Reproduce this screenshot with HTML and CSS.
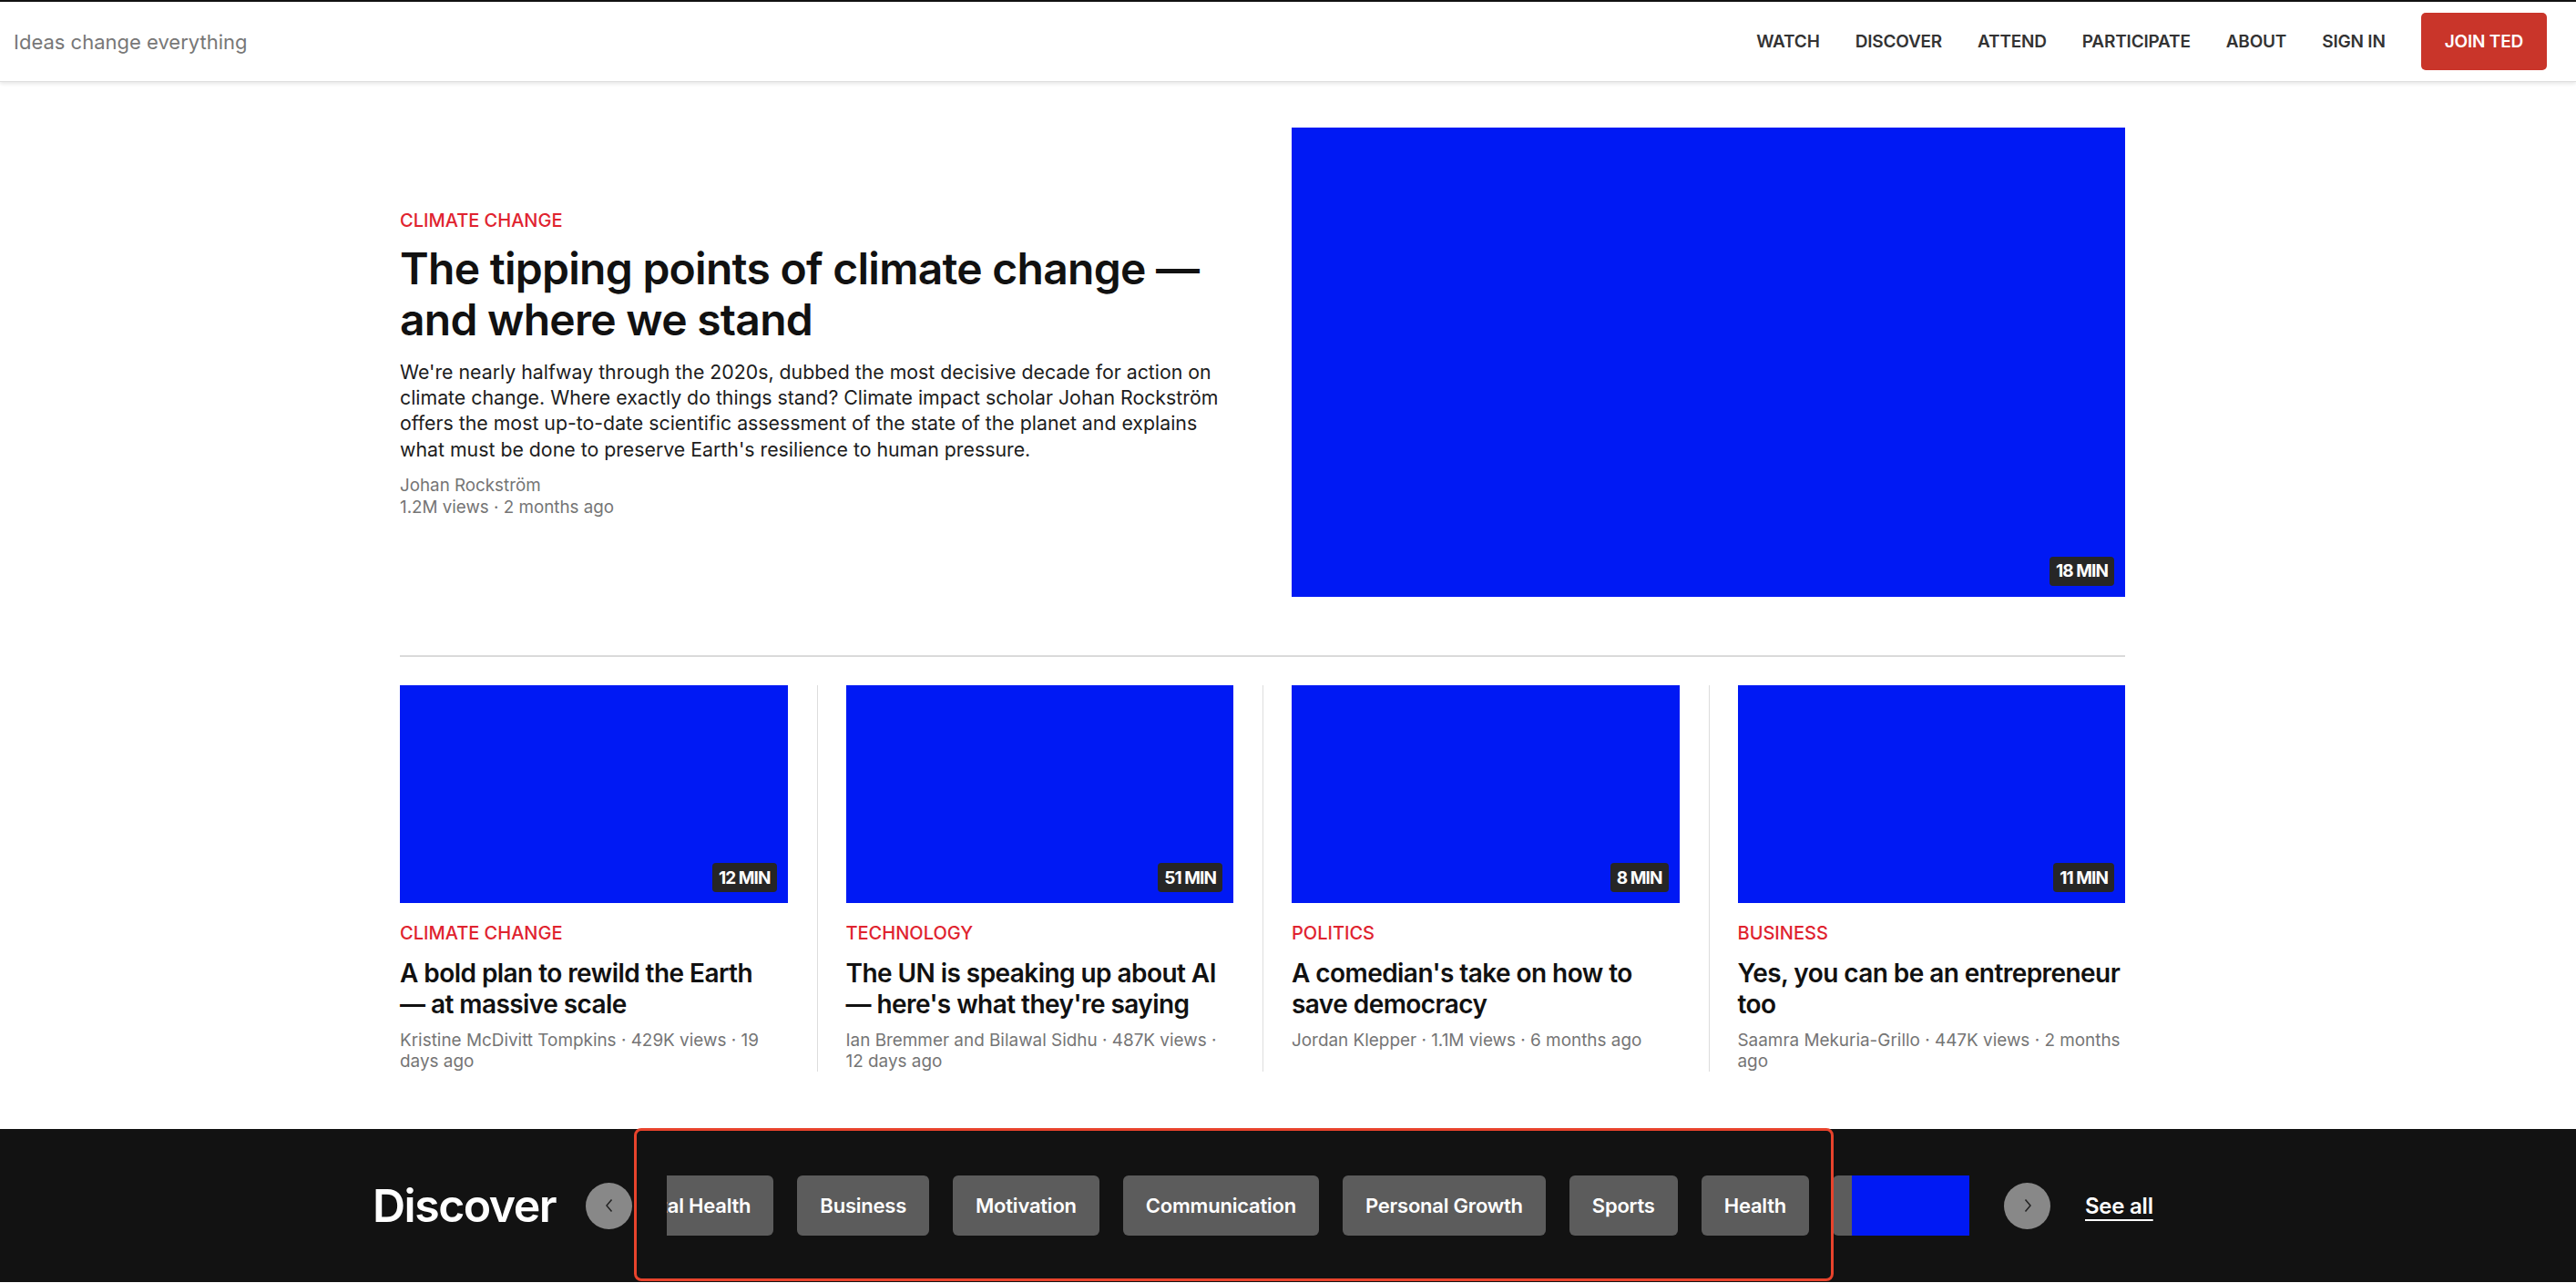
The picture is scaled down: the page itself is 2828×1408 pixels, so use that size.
FILE: index.html
```html
<!DOCTYPE html>
<html lang="en">
<head>
<meta charset="utf-8">
<title>TED: Ideas change everything</title>
<link rel="stylesheet" href="styles.css">
</head>
<body>
<header class="site-header">
  <div class="brand">Ideas change everything</div>
  <nav class="main-nav">
    <a class="nav-link" href="#">WATCH</a>
    <a class="nav-link" href="#">DISCOVER</a>
    <a class="nav-link" href="#">ATTEND</a>
    <a class="nav-link" href="#">PARTICIPATE</a>
    <a class="nav-link" href="#">ABOUT</a>
    <a class="nav-link" href="#">SIGN IN</a>
    <a class="join-btn" href="#">JOIN TED</a>
  </nav>
</header>

<main class="content">
  <section class="hero">
    <div class="hero-text">
      <div class="topic">CLIMATE CHANGE</div>
      <h1 class="hero-title">The tipping points of climate change — and where we stand</h1>
      <p class="hero-desc">We're nearly halfway through the 2020s, dubbed the most decisive decade for action on climate change. Where exactly do things stand? Climate impact scholar Johan Rockström offers the most up-to-date scientific assessment of the state of the planet and explains what must be done to preserve Earth's resilience to human pressure.</p>
      <div class="hero-meta">
        <div>Johan Rockström</div>
        <div>1.2M views · 2 months ago</div>
      </div>
    </div>
    <div class="thumb hero-thumb"><span class="duration">18 MIN</span></div>
  </section>

  <hr class="divider">

  <section class="cards">
    <article class="card">
      <div class="thumb"><span class="duration">12 MIN</span></div>
      <div class="topic card-topic">CLIMATE CHANGE</div>
      <h2 class="card-title">A bold plan to rewild the Earth —&nbsp;at massive scale</h2>
      <div class="card-meta">Kristine McDivitt Tompkins · 429K views · 19 days ago</div>
    </article>
    <article class="card">
      <div class="thumb"><span class="duration">51 MIN</span></div>
      <div class="topic card-topic">TECHNOLOGY</div>
      <h2 class="card-title">The UN is speaking up about AI —&nbsp;here's what they're saying</h2>
      <div class="card-meta">Ian Bremmer and Bilawal Sidhu · 487K views · 12 days ago</div>
    </article>
    <article class="card">
      <div class="thumb"><span class="duration">8 MIN</span></div>
      <div class="topic card-topic">POLITICS</div>
      <h2 class="card-title">A comedian's take on how to save democracy</h2>
      <div class="card-meta">Jordan Klepper · 1.1M views · 6 months ago</div>
    </article>
    <article class="card">
      <div class="thumb"><span class="duration">11 MIN</span></div>
      <div class="topic card-topic">BUSINESS</div>
      <h2 class="card-title">Yes, you can be an entrepreneur too</h2>
      <div class="card-meta">Saamra Mekuria-Grillo · 447K views · 2 months ago</div>
    </article>
  </section>
</main>

<section class="discover">
  <h2 class="discover-title">Discover</h2>
  <button class="arrow" aria-label="Previous">
    <svg width="14" height="20" viewBox="0 0 14 20"><polyline points="9.5,3.5 4,10 9.5,16.5" fill="none" stroke="#222" stroke-width="1.5"/></svg>
  </button>
  <div class="chip-viewport">
    <div class="chip-track">
      <span class="chip">Mental Health</span>
      <span class="chip">Business</span>
      <span class="chip">Motivation</span>
      <span class="chip">Communication</span>
      <span class="chip">Personal Growth</span>
      <span class="chip">Sports</span>
      <span class="chip">Health</span>
      <span class="chip">Innovation</span>
    </div>
    <div class="chip-cover"></div>
  </div>
  <button class="arrow" aria-label="Next">
    <svg width="14" height="20" viewBox="0 0 14 20"><polyline points="4.5,3.5 10,10 4.5,16.5" fill="none" stroke="#222" stroke-width="1.5"/></svg>
  </button>
  <a class="see-all" href="#">See all</a>
</section>

<div class="highlight-box"></div>
</body>
</html>
```

FILE: styles.css
```css
* { box-sizing: border-box; }

html, body {
  margin: 0;
  padding: 0;
  background: #ffffff;
  font-family: Inter, "Noto Sans", "Liberation Sans", sans-serif;
  color: #111111;
}

body { position: relative; overflow: hidden; }

/* Header */
.site-header {
  height: 89px;
  border-top: 2px solid #111;
  display: flex;
  align-items: center;
  justify-content: space-between;
  padding: 0 32px 0 15px;
  background: #fff;
  box-shadow: 0 1px 0 #dedede, 0 3px 4px rgba(0, 0, 0, 0.1);
  position: relative;
  z-index: 2;
}

.brand {
  font-size: 22px;
  color: #777777;
  font-weight: 400;
}

.main-nav {
  display: flex;
  align-items: center;
  gap: 39px;
}

.nav-link {
  font-size: 19px;
  font-weight: 600;
  color: #333333;
  text-decoration: none;
  letter-spacing: -0.01em;
}

.join-btn {
  display: flex;
  align-items: center;
  height: 63px;
  padding: 0 26px;
  background: #c9352a;
  color: #fff;
  font-size: 19px;
  font-weight: 600;
  letter-spacing: -0.01em;
  text-decoration: none;
  border-radius: 5px;
}

/* Main */
.content {
  width: 1894px;
  margin-left: 439px;
  padding: 51px 0 63px;
}

.hero {
  display: grid;
  grid-template-columns: 1fr 1fr;
  column-gap: 64px;
  align-items: center;
}

.hero-text { padding-top: 4px; }

.topic {
  font-size: 20px;
  line-height: 24px;
  font-weight: 500;
  color: #e0232f;
}

.hero-title {
  margin: 13px 0 0;
  font-size: 48px;
  line-height: 56px;
  font-weight: 600;
  letter-spacing: -0.015em;
  color: #111;
}

.hero-desc {
  margin: 15px 0 0;
  font-size: 21.3px;
  line-height: 28.3px;
  color: #1c1c1c;
}

.hero-meta {
  margin-top: 14px;
  font-size: 18.8px;
  line-height: 24px;
  color: #757575;
}

.thumb {
  position: relative;
  background: #0019f4;
  aspect-ratio: 16 / 9;
}

.duration {
  position: absolute;
  right: 12px;
  bottom: 12px;
  height: 32px;
  padding: 0 7px;
  display: flex;
  align-items: center;
  background: #262626;
  color: #fff;
  font-size: 19px;
  font-weight: 700;
  letter-spacing: -0.05em;
  border-radius: 4px;
}

.divider {
  margin: 64px 0 0;
  border: 0;
  height: 2px;
  background: #dadada;
}

.cards {
  margin-top: 31px;
  display: grid;
  grid-template-columns: repeat(4, 1fr);
  column-gap: 64px;
}

.card { position: relative; }

.card + .card::before {
  content: "";
  position: absolute;
  left: -32px;
  top: 0;
  bottom: 0;
  width: 1px;
  background: #dddddd;
}

.card-topic { margin-top: 21px; }

.card-title {
  margin: 15px 0 0;
  font-size: 28px;
  line-height: 34px;
  font-weight: 600;
  letter-spacing: -0.02em;
  color: #111;
}

.card-meta {
  margin-top: 11px;
  font-size: 18.9px;
  line-height: 23px;
  color: #757575;
}

/* Discover bar */
.discover {
  height: 168px;
  background: #121212;
  display: flex;
  align-items: center;
  gap: 38px;
  padding-left: 409px;
}

.discover-title {
  margin: 0;
  width: 196px;
  font-size: 50px;
  font-weight: 600;
  letter-spacing: -0.03em;
  color: #fff;
  white-space: nowrap;
}

.arrow {
  width: 51px;
  height: 51px;
  border-radius: 50%;
  border: 0;
  padding: 0;
  background: #888888;
  display: flex;
  align-items: center;
  justify-content: center;
  flex: none;
}

.chip-viewport {
  position: relative;
  width: 1430px;
  height: 66px;
  overflow: hidden;
  flex: none;
}

.chip-track {
  display: flex;
  gap: 26px;
  margin-left: -78px;
}

.chip {
  flex: none;
  height: 66px;
  padding: 0 25px;
  display: flex;
  align-items: center;
  background: #5c5c5c;
  color: #fff;
  font-size: 22px;
  font-weight: 600;
  letter-spacing: -0.01em;
  border-radius: 6px;
  white-space: nowrap;
}

.chip-cover {
  position: absolute;
  right: 0;
  top: 0;
  width: 129px;
  height: 66px;
  background: #0019f4;
}

.see-all {
  color: #fff;
  font-size: 24px;
  font-weight: 600;
  letter-spacing: -0.01em;
  text-decoration: underline;
  text-decoration-thickness: 2px;
  text-underline-offset: 6px;
}

.highlight-box {
  position: absolute;
  left: 696px;
  top: 1238px;
  width: 1317px;
  height: 168px;
  border: 3px solid #e8432c;
  border-radius: 8px;
  pointer-events: none;
}
```
